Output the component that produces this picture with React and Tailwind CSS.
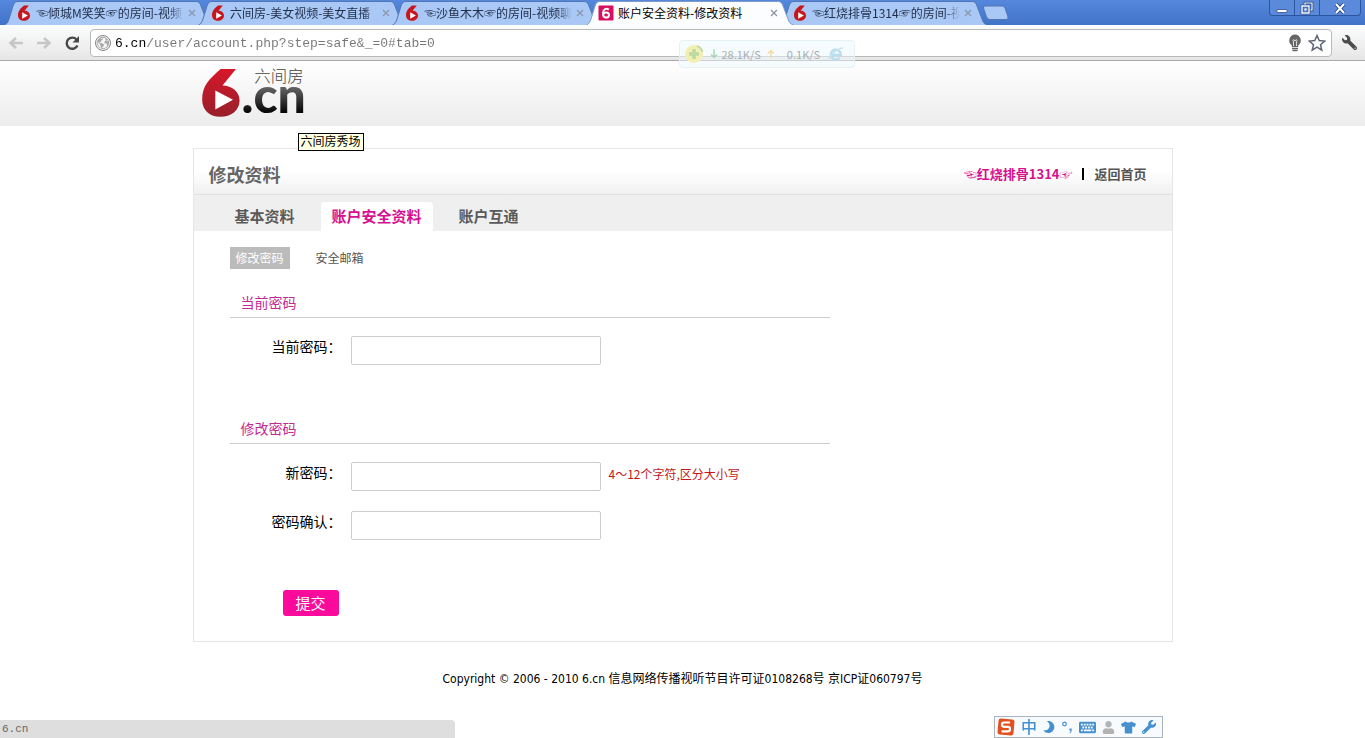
import React from "react";
import { FaWrench, FaTshirt, FaUser, FaMoon, FaKeyboard } from "react-icons/fa";
import { IoEarth } from "react-icons/io5";

const SIX =
  "M60 24 L107 24 L66 75 C95 75 118 95 118 120 C118 150 92 170 60 170 C27 170 4 150 4 118 C4 75 25 55 60 24 Z";

function SixIcon() {
  return (
    <svg viewBox="0 20 122 152" className="h-4 w-4 shrink-0" aria-hidden="true">
      <path d={SIX} fill="#c8161d" />
      <path d="M44 88 L44 150 L98 119 Z" fill="#fff" />
    </svg>
  );
}

function PinkSixIcon() {
  return (
    <svg viewBox="0 0 16 16" className="h-4 w-4 shrink-0" aria-hidden="true">
      <rect x="0.5" y="0.5" width="15" height="15" rx="1" fill="#d6105e" />
      <path
        d="M10.8 4.6 C8 2.6 5 4.4 5 8.3 C5 11.4 6.4 12.5 8.1 12.5 C9.9 12.5 11 11.300 11 9.900 C11 8.300 9.900 7.400 8.300 7.400 C6.600 7.400 5.400 8.300 5.200 9.600"
        fill="none"
        stroke="#fff"
        strokeWidth="2"
      />
    </svg>
  );
}

const tabs = [
  { title: "☜倾城M笑笑☞的房间-视频" },
  { title: "六间房-美女视频-美女直播" },
  { title: "☜沙鱼木木☞的房间-视频聊" },
  { title: "账户安全资料-修改资料", active: true },
  { title: "☜红烧排骨1314☞的房间-视" },
];

function BrowserTab({ title, active }) {
  return (
    <div className={active ? "relative z-10 -mr-3.5 h-6 w-52 shrink-0" : "relative -mr-3.5 h-6 w-52 shrink-0"}>
      <svg viewBox="0 0 208 24" preserveAspectRatio="none" className="absolute inset-0 h-full w-full" aria-hidden="true">
        <path
          d="M0.500 24 C3 23 4 21 5 18 L9 5 C10 2 11 0.500 14 0.500 L192 0.500 C195 0.500 196 2 197 5 L202 18 C203 21 204 23 207.500 24"
          fill={active ? "#fcfdfe" : "#a9c8f5"}
          stroke={active ? "#7f9cc9" : "#5277b5"}
        />
      </svg>
      <div className="relative flex h-full items-center pr-3 pl-3">
        {active ? <PinkSixIcon /> : <SixIcon />}
        <span
          className={
            active
              ? "ml-1 min-w-0 flex-1 overflow-hidden text-xs whitespace-nowrap text-black"
              : "ml-1 min-w-0 flex-1 overflow-hidden text-xs whitespace-nowrap text-[#22304a] [mask-image:linear-gradient(to_right,#000_90%,transparent)]"
          }
        >
          {title}
        </span>
        <button type="button" aria-label="关闭标签页" className="flex h-4 w-4 items-center justify-center">
          <svg viewBox="0 0 8 8" className="h-2 w-2" aria-hidden="true">
            <path d="M1 1 L7 7 M7 1 L1 7" stroke="#8b98ad" strokeWidth="1.400" />
          </svg>
        </button>
      </div>
    </div>
  );
}

function WindowButtons() {
  const cls = "flex h-4 items-center justify-center border-r border-[#2c55a0]";
  return (
    <div className="mr-1 ml-auto flex h-4 shrink-0 overflow-hidden rounded-b border border-t-0 border-[#2c55a0] bg-[#5b8adb]">
      <button type="button" aria-label="最小化" className={cls + " w-[25px]"}>
        <svg viewBox="0 0 14 14" className="h-3.5 w-3.5" aria-hidden="true">
          <rect x="2" y="8.500" width="10" height="3" rx="0.500" fill="#fff" stroke="#2a4c8a" strokeWidth="0.800" />
        </svg>
      </button>
      <button type="button" aria-label="还原" className={cls + " w-[25px]"}>
        <svg viewBox="0 0 14 14" className="h-3.5 w-3.5" fill="none" aria-hidden="true">
          <path d="M5 2 H12 V9 H5 Z" stroke="#1f3f7a" strokeWidth="2.600" />
          <path d="M5 2 H12 V9 H5 Z" stroke="#fff" strokeWidth="1.200" />
          <path d="M2 5 H9 V12 H2 Z" fill="#5b8adb" stroke="#1f3f7a" strokeWidth="2.600" />
          <path d="M2 5 H9 V12 H2 Z" stroke="#fff" strokeWidth="1.400" />
          <rect x="4.500" y="7.500" width="2" height="2" fill="#fff" />
        </svg>
      </button>
      <button type="button" aria-label="关闭" className="flex h-4 w-10 items-center justify-center">
        <svg viewBox="0 0 14 14" className="h-3.5 w-3.5" aria-hidden="true">
          <path d="M3 3 L11 12 M11 3 L3 12" stroke="#1f3f7a" strokeWidth="3.600" />
          <path d="M3 3 L11 12 M11 3 L3 12" stroke="#fff" strokeWidth="2" />
        </svg>
      </button>
    </div>
  );
}

function Arrow({ flip }) {
  return (
    <svg viewBox="0 0 16 14" className={flip ? "h-3.5 w-4 rotate-180" : "h-3.5 w-4"} aria-hidden="true">
      <path d="M8 2 L2.500 7 L8 12 M3 7 H15" fill="none" stroke="#c6c6c6" strokeWidth="2.600" />
    </svg>
  );
}

function Toolbar() {
  return (
    <div className="flex h-9 items-center border-b border-[#a9a9a9] bg-linear-to-b from-[#fcfdfe] to-[#e6e6e6] pr-2 pl-2">
      <button type="button" aria-label="后退"><Arrow /></button>
      <button type="button" aria-label="前进" className="ml-3"><Arrow flip /></button>
      <button type="button" aria-label="重新加载" className="ml-3">
        <svg viewBox="0 0 16 16" className="h-4 w-4" aria-hidden="true">
          <path d="M12.500 4.500 A5.600 5.600 0 1 0 13.400 10.500" fill="none" stroke="#484848" strokeWidth="2.400" />
          <path d="M15 1 V7.500 H8.500 Z" fill="#484848" />
        </svg>
      </button>
      <div className="ml-2.5 flex h-7 min-w-0 flex-1 items-center rounded-sm border border-[#b9b9b9] bg-white pr-1 pl-1">
        <span className="flex h-4 w-4 items-center justify-center rounded-full border border-[#858585] bg-[#f5f5f5] text-[#a8a8a8]">
          <IoEarth size={14} />
        </span>
        <input
          aria-label="网址"
          defaultValue="6.cn/user/account.php?step=safe&_=0#tab=0"
          className="ml-1 min-w-0 flex-1 bg-linear-to-r from-black from-[32px] to-[#777] to-[32px] bg-clip-text pt-0.5 font-['Liberation_Mono',monospace] text-[13px] text-transparent outline-none"
        />
        <button type="button" aria-label="提示" className="flex h-5 w-5 items-center justify-center">
          <svg viewBox="0 0 16 18" className="h-4.5 w-4" aria-hidden="true">
            <path d="M8 0.500 A6 6 0 0 0 4.800 11.400 V13 H11.200 V11.400 A6 6 0 0 0 8 0.500 Z" fill="#666" />
            <path d="M6.500 12 V8 Q5.500 6 6.700 5.500 L8 7 L9.300 5.500 Q10.500 6 9.500 8 V12" fill="none" stroke="#ddd" />
            <path d="M5 14.500 H11 M5.500 16.500 H10.500" stroke="#666" strokeWidth="1.600" />
          </svg>
        </button>
        <button type="button" aria-label="收藏此网页" className="ml-0.5 flex h-5 w-5 items-center justify-center">
          <svg viewBox="0 0 18 18" className="h-4.5 w-4.5" aria-hidden="true">
            <path
              d="M9 1.500 L11.200 6.600 L16.700 7.100 L12.500 10.700 L13.800 16.100 L9 13.200 L4.200 16.100 L5.500 10.700 L1.300 7.100 L6.800 6.600 Z"
              fill="#fff"
              stroke="#5d6672"
              strokeWidth="1.500"
            />
          </svg>
        </button>
      </div>
      <button type="button" aria-label="自定义及控制" className="ml-2.5 text-[#4c4c4c]">
        <FaWrench size={15} className="-scale-x-100" />
      </button>
    </div>
  );
}

function SpeedWidget() {
  return (
    <div className="absolute top-10 left-1/2 z-20 -ml-1 flex h-7 w-44 items-center rounded border border-[#e6f1f6] bg-[#eef8fc]/50 pl-1 text-[11px] text-[#a9aeb2]">
      <svg viewBox="0 0 20 20" className="h-5 w-5 shrink-0" aria-hidden="true">
        <circle cx="10" cy="10" r="9" fill="#f3efb0" />
        <path d="M13 2 A9 9 0 0 1 18.500 8" fill="none" stroke="#c7d9b4" strokeWidth="2" />
        <path d="M10 5 V15 M5 10 H15" stroke="#bcd9a6" strokeWidth="3.600" />
      </svg>
      <svg viewBox="0 0 8 9" className="ml-1.5 h-2.5 w-2" aria-hidden="true">
        <path d="M4 0 V8 M1 5 L4 8 L7 5" fill="none" stroke="#a8d5b5" strokeWidth="1.500" />
      </svg>
      <span className="ml-1">28.1K/S</span>
      <svg viewBox="0 0 8 9" className="ml-1.5 h-2.5 w-2" aria-hidden="true">
        <path d="M4 9 V1 M1 4 L4 1 L7 4" fill="none" stroke="#f5dba5" strokeWidth="1.500" />
      </svg>
      <span className="ml-3">0.1K/S</span>
      <svg viewBox="0 0 16 16" className="ml-2 h-4 w-4" aria-hidden="true">
        <path d="M3.500 9 H12.800 A5 5 0 1 0 11.500 12" fill="none" stroke="#b9dcf0" strokeWidth="2.400" />
        <path d="M1 13 C3 8 10 2 15 2" fill="none" stroke="#c9e4f3" strokeWidth="1.400" />
      </svg>
    </div>
  );
}

function Logo() {
  return (
    <svg viewBox="0 0 330 195" className="h-16 w-28" role="img" aria-label="六间房 6.cn">
      <defs>
        <linearGradient id="red" x1="0" y1="0" x2="0" y2="1">
          <stop offset="0" stopColor="#d8172a" />
          <stop offset="1" stopColor="#97202b" />
        </linearGradient>
        <linearGradient id="ink" gradientUnits="userSpaceOnUse" x1="0" y1="75" x2="0" y2="155">
          <stop offset="0" stopColor="#6a6a6a" />
          <stop offset="1" stopColor="#080808" />
        </linearGradient>
      </defs>
      <path d={SIX} fill="url(#red)" />
      <path d="M44 90 L44 148 L98 118 Z" fill="#fff" />
      <text x="124" y="157" fontFamily="Lato, sans-serif" fontWeight="900" fontSize="152" fill="url(#ink)">.cn</text>
      <text x="163" y="63" fontFamily="Noto Sans CJK SC, sans-serif" fontWeight="300" fontSize="50" fill="#444">六间房</text>
    </svg>
  );
}

function SectionTitle({ children }) {
  return (
    <h2 className="h-[30px] border-b border-[#ccc] pl-[11px] text-sm leading-7 text-[#c22a96]">{children}</h2>
  );
}

function Field({ id, label, hint }) {
  return (
    <div className="flex">
      <label htmlFor={id} className="mr-[9px] w-28 text-right text-sm leading-5 text-black">{label}</label>
      <input id={id} type="password" className="h-[29px] w-[250px] rounded-xs border border-[#ccc] bg-white px-2 text-sm outline-none" />
      {hint && <span className="ml-2 text-xs leading-6 text-[#c01818]">{hint}</span>}
    </div>
  );
}

function ImeBar() {
  return (
    <div className="fixed right-[202px] bottom-0 flex h-[22px] w-[169px] items-center justify-between border border-[#a9b4c2] bg-[#f7fbfe] pr-1.5 pl-0.5 text-[#4690d0]">
      <svg viewBox="0 0 18 18" className="h-4.5 w-4.5" aria-hidden="true">
        <rect x="1" y="1" width="16" height="16" rx="2.500" fill="#e2501f" transform="rotate(5 9 9)" />
        <path d="M13 4.500 H7 Q5 4.500 5 6.600 Q5 8.800 7 8.800 H11 Q13 8.800 13 11 Q13 13.400 11 13.400 H4.600" fill="none" stroke="#fff" strokeWidth="2.200" />
      </svg>
      <span className="pb-0.5 text-base leading-none font-medium">中</span>
      <FaMoon size={12} className="-scale-x-100" />
      <svg viewBox="0 0 12 14" className="h-3.5 w-3" aria-hidden="true">
        <circle cx="3.500" cy="4" r="1.800" fill="none" stroke="#4690d0" strokeWidth="1.200" />
        <path d="M8.500 8.500 h2.200 v2 q0 2 -2 3 v-1 q1 -0.600 1 -1.800 h-1.200 z" fill="#4690d0" />
      </svg>
      <FaKeyboard size={17} />
      <FaUser size={13} className="text-[#b3b3b3]" />
      <FaTshirt size={15} />
      <FaWrench size={14} />
    </div>
  );
}

export default function App() {
  return (
    <div className="relative min-h-screen bg-white font-['Noto_Sans_CJK_SC','DejaVu_Sans',sans-serif] text-black">
      <div className="flex h-[25px] bg-linear-to-b from-[#5588dd] to-[#4173c9]">
        <div className="flex min-w-0 items-end pl-1">
          {tabs.map((t) => (
            <BrowserTab key={t.title} title={t.title} active={t.active} />
          ))}
          <button type="button" aria-label="新标签页" className="mb-1 ml-2 h-4 w-7 shrink-0">
            <svg viewBox="0 0 28 16" className="h-4 w-7" aria-hidden="true">
              <path d="M3 1 H20 Q22 1 23 3 L26 12 Q26.500 14.500 24 14.500 H8 Q5.500 14.500 4.500 12 L1.500 3 Q1 1 3 1 Z" fill="#a9c8f5" stroke="#5277b5" />
            </svg>
          </button>
        </div>
        <WindowButtons />
      </div>
      <Toolbar />
      <SpeedWidget />

      <header className="h-[65px] bg-linear-to-b from-white to-[#ececec]">
        <div className="mx-auto w-[980px] max-w-full pl-1.5">
          <div className="relative w-28">
            <a href="#home" className="block">
              <Logo />
            </a>
            <div className="absolute top-[72px] left-[99px] border border-black bg-[#ffffe1] px-0.5 pb-0.5 text-xs leading-[14px] whitespace-nowrap">
              六间房秀场
            </div>
          </div>
        </div>
      </header>

      <main className="mx-auto mt-[22px] w-[980px] max-w-full border border-[#e6e6e6]">
        <div className="flex h-[46px] items-center justify-between border-b border-[#e0e0e0] bg-linear-to-b from-white from-50% to-[#f0f0f0] pt-1 pr-[25px] pl-[15px]">
          <h1 className="text-lg font-bold text-[#666]">修改资料</h1>
          <div className="flex items-center text-[13px] font-bold">
            <a href="#user" className="text-[#d6108f]">☜红烧排骨1314☞</a>
            <span className="mx-2.5 h-3 w-0.5 bg-black" />
            <a href="#home" className="text-[#555]">返回首页</a>
          </div>
        </div>
        <nav className="flex h-9 items-end gap-[15px] bg-[#efefef] pl-[30px] text-[15px] font-bold text-[#5a5a5a]">
          <a href="#tab=1" className="px-[11px] pb-0.5 leading-[27px]">基本资料</a>
          <a href="#tab=0" className="rounded-t bg-white px-[11px] pb-0.5 leading-[27px] text-[#d6108f]">账户安全资料</a>
          <a href="#tab=2" className="px-[11px] pb-0.5 leading-[27px]">账户互通</a>
        </nav>

        <div className="px-9 pt-4 pb-[25px]">
          <div className="flex gap-5 text-xs leading-[22px]">
            <a href="#password" className="bg-[#bbb] px-1.5 text-white">修改密码</a>
            <a href="#email" className="px-1.5 text-[#555]">安全邮箱</a>
          </div>

          <form className="mt-[19px] w-[600px] max-w-full" onSubmit={(e) => e.preventDefault()}>
            <SectionTitle>当前密码</SectionTitle>
            <div className="mt-[18px]">
              <Field id="current" label="当前密码：" />
            </div>
            <div className="mt-[49px]">
              <SectionTitle>修改密码</SectionTitle>
            </div>
            <div className="mt-[18px] flex flex-col gap-5">
              <Field id="next" label="新密码：" hint="4～12个字符,区分大小写" />
              <Field id="confirm" label="密码确认：" />
            </div>
            <button type="submit" className="mt-[50px] ml-[53px] block h-[26px] w-14 rounded-[3px] bg-[#fb0a9b] text-[15px] leading-[26px] text-white">
              提交
            </button>
          </form>
        </div>
      </main>

      <footer className="py-7 text-center font-['DejaVu_Sans_Condensed','DejaVu_Sans','Noto_Sans_CJK_SC',sans-serif] text-xs leading-[18px]">
        Copyright © 2006 - 2010 6.cn 信息网络传播视听节目许可证0108268号 京ICP证060797号
      </footer>

      <div className="fixed bottom-0 left-0 h-[18px] w-1/3 rounded-tr bg-[#dedede] pl-0.5 font-['Liberation_Mono',monospace] text-[11px] leading-[18px] text-[#666]">
        6.cn
      </div>
      <ImeBar />
    </div>
  );
}
